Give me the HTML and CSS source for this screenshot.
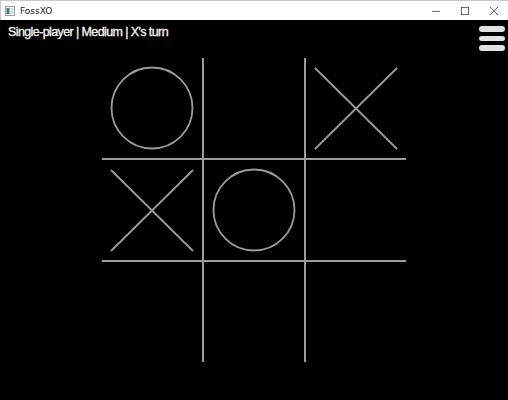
FILE: index.html
```html
<!DOCTYPE html>
<html>
<head>
<meta charset="utf-8">
<link rel="stylesheet" href="styles.css">
</head>
<body>
<div class="window">
  <div class="titlebar">
    <div class="app">
      <svg class="app-icon" width="10" height="10" viewBox="0 0 10 10"><rect x="0.5" y="0.5" width="9" height="9" fill="#f4f4f4" stroke="#9aa3a8"/><rect x="1.5" y="2" width="3" height="6" fill="#3f7f6e"/><rect x="5.5" y="2" width="3" height="6" fill="#d8dcdf"/></svg>
      <span class="app-title">FossXO</span>
    </div>
    <div class="controls">
      <span class="ctl"><svg width="10" height="10" viewBox="0 0 10 10"><line x1="0" y1="5.5" x2="10" y2="5.5" stroke="#444" stroke-width="1"/></svg></span>
      <span class="ctl"><svg width="10" height="10" viewBox="0 0 10 10"><rect x="0.5" y="0.5" width="9" height="9" fill="none" stroke="#444" stroke-width="1"/></svg></span>
      <span class="ctl"><svg width="10" height="10" viewBox="0 0 10 10"><path d="M0 0 L10 10 M10 0 L0 10" stroke="#444" stroke-width="1"/></svg></span>
    </div>
  </div>
  <div class="game">
    <div class="hud">
      <div class="status">Single-player | Medium | X's turn</div>
      <div class="menu">
        <span class="bar"></span>
        <span class="bar"></span>
        <span class="bar"></span>
      </div>
    </div>
    <div class="stage">
      <div class="board">
        <div class="cell"><svg class="mark" viewBox="0 0 100 100"><circle cx="50" cy="50" r="40.5"/></svg></div>
        <div class="cell"></div>
        <div class="cell"><svg class="mark" viewBox="0 0 100 100"><path d="M9 10 L91 91 M91 10 L9 91"/></svg></div>
        <div class="cell"><svg class="mark" viewBox="0 0 100 100"><path d="M9 10 L91 91 M91 10 L9 91"/></svg></div>
        <div class="cell"><svg class="mark" viewBox="0 0 100 100"><circle cx="50" cy="50" r="40.5"/></svg></div>
        <div class="cell"></div>
        <div class="cell"></div>
        <div class="cell"></div>
        <div class="cell"></div>
      </div>
    </div>
  </div>
</div>
</body>
</html>
```
FILE: styles.css
```css
html, body {
  margin: 0;
  padding: 0;
  background: #000;
}
.window {
  width: 508px;
  height: 400px;
  display: flex;
  flex-direction: column;
  background: #000;
}
.titlebar {
  height: 20px;
  flex: none;
  background: #fff;
  display: flex;
  align-items: center;
  justify-content: space-between;
  box-sizing: border-box;
  border-left: 1px solid #c8c8c8;
  border-top: 1px solid #c8c8c8;
}
.app {
  display: flex;
  align-items: center;
  gap: 5px;
  padding-left: 4px;
}
.app-icon {
  display: block;
}
.app-title {
  font-family: "DejaVu Sans", "Liberation Sans", sans-serif;
  font-size: 9px;
  color: #222;
}
.controls {
  display: flex;
  height: 100%;
}
.ctl {
  width: 29px;
  display: flex;
  align-items: center;
  justify-content: center;
}
.ctl svg {
  display: block;
  width: 8px;
  height: 8px;
}
.game {
  flex: 1;
  display: flex;
  flex-direction: column;
  position: relative;
}
.hud {
  position: absolute;
  top: 0;
  left: 0;
  right: 0;
  display: flex;
  justify-content: space-between;
  align-items: flex-start;
  padding: 4px 3px 0 8px;
}
.status {
  font-family: "Liberation Sans", Arial, sans-serif;
  font-size: 12.5px;
  letter-spacing: -0.6px;
  -webkit-text-stroke: 0.35px #f2f2f2;
  color: #f2f2f2;
  line-height: 16px;
}
.menu {
  display: flex;
  flex-direction: column;
  gap: 4px;
  padding-top: 2px;
}
.bar {
  display: block;
  width: 26px;
  height: 5.5px;
  border-radius: 3px;
  background: #e2e2e2;
}
.stage {
  flex: 1;
  display: flex;
  align-items: center;
  justify-content: center;
}
.board {
  display: grid;
  grid-template-columns: 100px 100px 100px;
  grid-template-rows: 100px 100px 100px;
  gap: 2px;
  background: #9c9c9c;
}
.cell {
  background: #000;
  display: flex;
  align-items: center;
  justify-content: center;
}
.mark {
  width: 100px;
  height: 100px;
  display: block;
  fill: none;
  stroke: #9c9c9c;
  stroke-width: 1.8;
}
```
